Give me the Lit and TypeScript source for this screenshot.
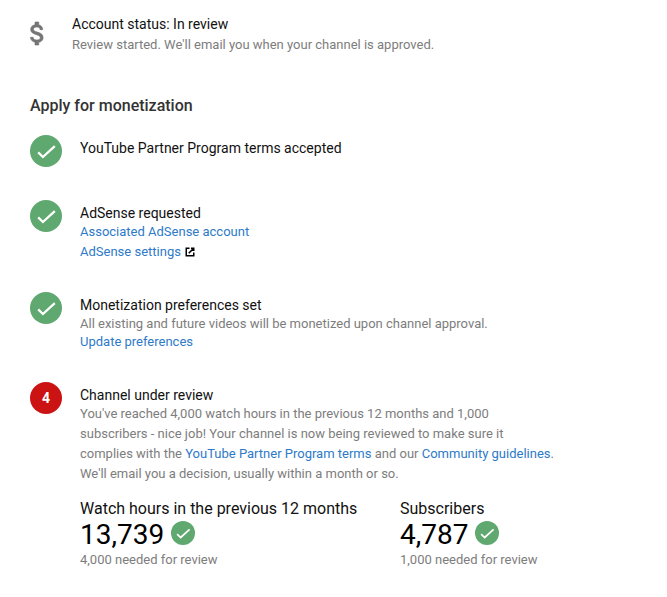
import { LitElement, html, css, svg } from "lit";
import { customElement } from "lit/decorators.js";

const check = svg`<path d="M8.2 17.4 12.9 22 24.8 11.2" fill="none" stroke="#fff" stroke-width="2.3"/>`;

@customElement("app-root")
export class AppRoot extends LitElement {
  static styles = css`
    :host { display: block; width: 667px; height: 597px; background: #fff; font-family: Roboto, "Liberation Sans", sans-serif; font-size: 14px; color: #111; box-sizing: border-box; padding: 15px 0 0 30px; overflow: hidden; }
    a { color: #2d7ac9; text-decoration: none; }
    .status { display: flex; height: 41px; }
    .dollar { width: 42px; flex: none; color: #757575; padding-top: 7px; box-sizing: border-box; }
    .dollar svg { display: block; width: 15px; height: 23px; overflow: visible; }
    .dollar path { stroke: currentColor; stroke-width: 0.5; }
    .title { line-height: 18px; }
    .sub { font-size: 13px; line-height: 20px; color: #7d7d7d; }
    .status .sub { line-height: 24px; }
    h2 { margin: 40px 0 0; font-size: 16px; font-weight: 500; line-height: 20px; color: #333; }
    .steps { display: flex; flex-direction: column; margin-top: 19px; }
    .step { display: flex; gap: 18px; }
    .step1 { height: 65px; }
    .step2 { height: 92px; }
    .step3 { height: 90px; }
    .badge { width: 32px; height: 32px; flex: none; border-radius: 50%; display: flex; align-items: center; justify-content: center; }
    .badge svg { display: block; }
    .green { background: #5fa86f; }
    .red { background: #cc1313; color: #fff; font-weight: 700; font-size: 14px; }
    .body { display: flex; flex-direction: column; padding-top: 4px; }
    .links { display: flex; flex-direction: column; }
    .lnk { font-size: 13px; line-height: 20px; display: flex; align-items: center; gap: 3px; }
    .step3 .lnk { line-height: 16px; }
    .ext { width: 12px; height: 12px; display: block; margin-top: -1px; }
    .ext path { fill: none; stroke: #000; stroke-width: 3; }
    .text { width: 475px; }
    .stats { display: flex; margin-top: 15px; }
    .stat { width: 320px; }
    .stat-title { font-size: 16px; line-height: 20px; }
    .num { display: flex; align-items: center; gap: 7px; font-size: 28px; line-height: 32px; color: #000; height: 30px; padding-top: 1px; }
    .mini { width: 24px; height: 24px; flex: none; display: block; margin-top: -4px; }
    .need { font-size: 13px; line-height: 18px; color: #7d7d7d; margin-top: 1px; }
  `;

  private badge() {
    return html`<div class="badge green"><svg width="32" height="32" viewBox="0 0 32 32">${check}</svg></div>`;
  }

  private mini() {
    return html`<svg class="mini" viewBox="0 0 32 32"><circle cx="16" cy="16" r="16" fill="#5fa86f"/>${check}</svg>`;
  }

  render() {
    return html`
      <div class="status">
        <div class="dollar">
          <svg viewBox="6 3 12 18" preserveAspectRatio="none"><path fill="currentColor" d="M11.8 10.9c-2.27-.59-3-1.2-3-2.15 0-1.09 1.01-1.85 2.7-1.85 1.78 0 2.44.85 2.5 2.1h2.21c-.07-1.72-1.12-3.3-3.21-3.81V3h-3v2.16c-1.94.42-3.5 1.68-3.5 3.61 0 2.31 1.91 3.46 4.7 4.13 2.5.6 3 1.48 3 2.41 0 .69-.49 1.79-2.7 1.79-2.06 0-2.87-.92-2.98-2.1h-2.2c.12 2.19 1.76 3.42 3.68 3.83V21h3v-2.15c1.95-.37 3.5-1.5 3.5-3.55 0-2.84-2.43-3.81-4.7-4.4z"/></svg>
        </div>
        <div>
          <div class="title">Account status: In review</div>
          <div class="sub">Review started. We'll email you when your channel is approved.</div>
        </div>
      </div>
      <h2>Apply for monetization</h2>
      <div class="steps">
        <div class="step step1">
          ${this.badge()}
          <div class="body"><div class="title">YouTube Partner Program terms accepted</div></div>
        </div>
        <div class="step step2">
          ${this.badge()}
          <div class="body">
            <div class="title">AdSense requested</div>
            <div class="links">
              <a class="lnk" href="#">Associated AdSense account</a>
              <a class="lnk" href="#">AdSense settings
                <svg class="ext" viewBox="0 0 24 24"><path d="M11 4.5H4.5V19.5H19.5V13M14 4.5H19.5V10M19.2 4.8 9.5 14.5"/></svg>
              </a>
            </div>
          </div>
        </div>
        <div class="step step3">
          ${this.badge()}
          <div class="body">
            <div class="title">Monetization preferences set</div>
            <div class="sub">All existing and future videos will be monetized upon channel approval.</div>
            <a class="lnk" href="#">Update preferences</a>
          </div>
        </div>
        <div class="step step4">
          <div class="badge red">4</div>
          <div class="body">
            <div class="title">Channel under review</div>
            <div class="sub text">You've reached 4,000 watch hours in the previous 12 months and 1,000 subscribers - nice job! Your channel is now being reviewed to make sure it complies with the <a href="#">YouTube Partner Program terms</a> and our <a href="#">Community guidelines</a>. We'll email you a decision, usually within a month or so.</div>
            <div class="stats">
              <div class="stat">
                <div class="stat-title">Watch hours in the previous 12 months</div>
                <div class="num">13,739 ${this.mini()}</div>
                <div class="need">4,000 needed for review</div>
              </div>
              <div class="stat">
                <div class="stat-title">Subscribers</div>
                <div class="num">4,787 ${this.mini()}</div>
                <div class="need">1,000 needed for review</div>
              </div>
            </div>
          </div>
        </div>
      </div>
    `;
  }
}
